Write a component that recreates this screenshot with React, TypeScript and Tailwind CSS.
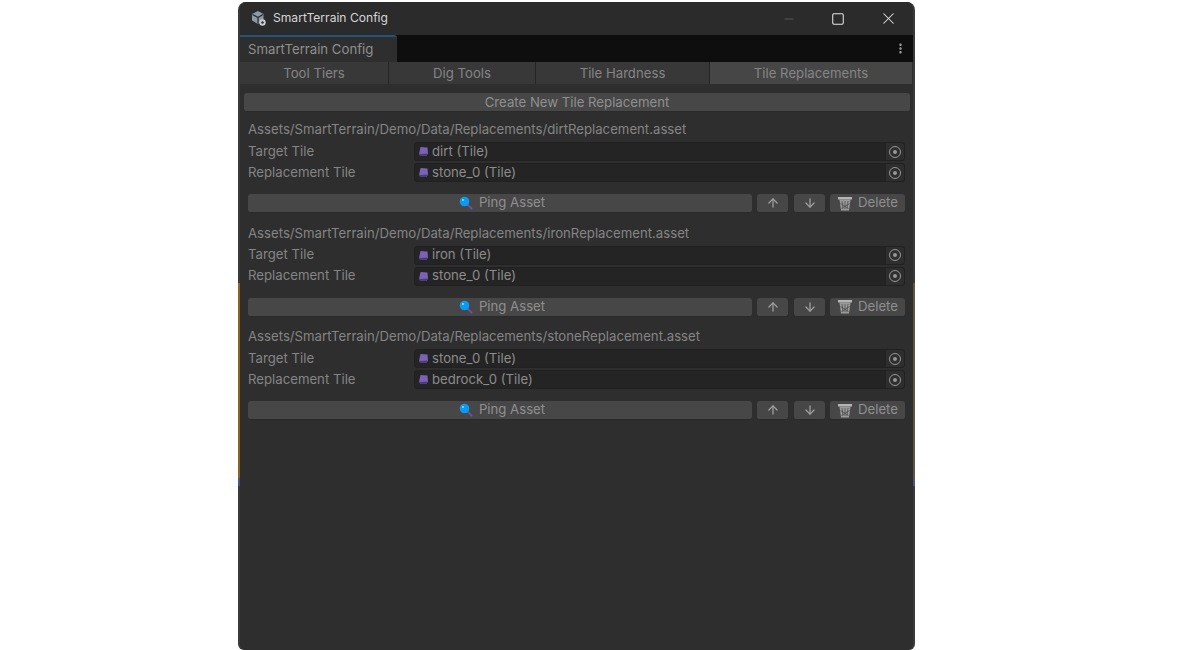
import { ArrowDown, ArrowUp, MoreVertical, Minus, Square, X } from "lucide-react"

const font = { fontFamily: "Inter" }

const tabs = [
  { name: "Tool Tiers", width: "w-[149px]" },
  { name: "Dig Tools", width: "w-[147px]" },
  { name: "Tile Hardness", width: "w-[174px]" },
  { name: "Tile Replacements", width: "w-[202px]" },
]

const replacements = [
  { path: "Assets/SmartTerrain/Demo/Data/Replacements/dirtReplacement.asset", target: "dirt (Tile)", replacement: "stone_0 (Tile)" },
  { path: "Assets/SmartTerrain/Demo/Data/Replacements/ironReplacement.asset", target: "iron (Tile)", replacement: "stone_0 (Tile)" },
  { path: "Assets/SmartTerrain/Demo/Data/Replacements/stoneReplacement.asset", target: "stone_0 (Tile)", replacement: "bedrock_0 (Tile)" },
]

function AppIcon() {
  return (
    <svg width="17" height="17" viewBox="0 0 17 17">
      <path d="M8 1l5.500 3v6.500L8 14 2 10.500V4z" fill="#8d9aa8" />
      <path d="M2.500 4.500L8 7.500l5-3M8 7.500V13.500" stroke="#2b2b2b" strokeWidth="1.300" fill="none" />
      <circle cx="12.500" cy="12.500" r="3.200" fill="#c9ced4" />
      <circle cx="12.500" cy="12.500" r="1.200" fill="#2b2b2b" />
    </svg>
  )
}

function TileIcon() {
  return (
    <svg width="11" height="11" viewBox="0 0 11 11" className="shrink-0">
      <path d="M2.500 1l7 .5.500 6-1.500 2.500-6.500-.5L1 8z" fill="#7a62b8" />
      <path d="M1 7.500l2 .5 6.500-.5-1 2.500-6.500-.5z" fill="#4a3d70" />
    </svg>
  )
}

function PingIcon() {
  return (
    <svg width="14" height="14" viewBox="0 0 14 14" className="shrink-0">
      <path d="M8.500 8.500l4 4" stroke="#6b4fa0" strokeWidth="2" strokeLinecap="round" />
      <circle cx="5.500" cy="5.500" r="4.800" fill="#0a9bf0" />
      <circle cx="4" cy="4" r="1.100" fill="#8fd6ff" />
    </svg>
  )
}

function TrashIcon() {
  return (
    <svg width="16" height="15" viewBox="0 0 16 15" className="shrink-0">
      <path d="M1 1h14v2.500H1z" fill="#b5b5b5" />
      <path d="M2.500 3.500h11l-1.500 11H4z" fill="#9a9a9a" />
      <path d="M5 5l1 8M8 5v8M11 5l-1 8M3.500 7.500l8 5M12.500 7.500l-8 5" stroke="#4f4f4f" strokeWidth="0.800" />
    </svg>
  )
}

function ObjectField({ label, value }: { label: string; value: string }) {
  return (
    <div className="flex items-center h-[19px] pl-[5px] pr-[4px]">
      <div className="w-[166px] shrink-0 text-[13.2px] text-[#858585] whitespace-nowrap">{label}</div>
      <div className="flex-1 h-[19px] flex items-center bg-[#242424] rounded-[3px] border border-[#212121]">
        <div className="flex-1 flex items-center gap-[3px] pl-[3px] text-[13.2px] text-[#8c8c8c] whitespace-nowrap">
          <TileIcon />
          {value}
        </div>
        <div className="w-[18px] h-full flex items-center justify-center bg-[#2e2e2e] rounded-r-[3px]">
          <div className="w-[12px] h-[12px] rounded-full border border-[#969696] flex items-center justify-center">
            <div className="w-[4px] h-[4px] rounded-full bg-[#969696]" />
          </div>
        </div>
      </div>
    </div>
  )
}

function ReplacementBlock({ path, target, replacement }: { path: string; target: string; replacement: string }) {
  return (
    <div className="h-[103.500px] pt-[8px] flex flex-col">
      <div className="h-[19px] pl-[5px] text-[13.2px] leading-[19px] text-[#858585] whitespace-nowrap">{path}</div>
      <div className="mt-[3px] flex flex-col gap-[2px]">
        <ObjectField label="Target Tile" value={target} />
        <ObjectField label="Replacement Tile" value={replacement} />
      </div>
      <div className="mt-[12px] flex items-center h-[19px] pl-[5px] pr-[4px] text-[13.2px] text-[#8f8f8f]">
        <div className="w-[504px] h-[19px] flex items-center justify-center gap-[6px] bg-[#474747] rounded-[3px] border-b border-[#2a2a2a]">
          <PingIcon />
          <span className="mr-[-4px]">Ping Asset</span>
        </div>
        <div className="ml-[5px] w-[31px] h-[19px] flex items-center justify-center bg-[#474747] rounded-[3px] border-b border-[#2a2a2a]">
          <ArrowUp size={14} strokeWidth={2.200} color="#a0a0a0" />
        </div>
        <div className="ml-[6px] w-[31px] h-[19px] flex items-center justify-center bg-[#474747] rounded-[3px] border-b border-[#2a2a2a]">
          <ArrowDown size={14} strokeWidth={2.200} color="#a0a0a0" />
        </div>
        <div className="ml-[5px] w-[75px] h-[19px] flex items-center justify-center gap-[5px] bg-[#474747] rounded-[3px] border-b border-[#2a2a2a]">
          <TrashIcon />
          Delete
        </div>
      </div>
    </div>
  )
}

export default function App() {
  return (
    <div className="w-[1200px] h-[650px] bg-white overflow-hidden pt-[2px] pl-[238px]" style={font}>
      <div className="relative w-[677px] h-[648px]">
        <div className="w-full h-full flex flex-col bg-[#2e2e2e] rounded-t-[8px] rounded-b-[6px] border-l-2 border-r-2 border-[#3a3a3a] overflow-hidden">
          {/* title bar */}
          <div className="h-[33px] shrink-0 flex items-center bg-[#2b2b2b] pl-[10px]">
            <AppIcon />
            <span className="ml-[6px] text-[12.1px] text-[#d6d6d6] whitespace-nowrap">SmartTerrain Config</span>
            <div className="ml-auto flex items-center">
              <Minus size={14} strokeWidth={1.300} color="#666666" className="mr-[35px]" />
              <Square size={14} strokeWidth={1.800} color="#e6e6e6" className="mr-[34px]" />
              <X size={19} strokeWidth={1.300} color="#e6e6e6" className="mr-[15px]" />
            </div>
          </div>

          {/* editor tab strip */}
          <div className="h-[27px] shrink-0 flex items-stretch bg-[#0e0e0e]">
            <div className="w-[157px] flex items-center pl-[8px] pt-[1px] bg-[#2e2e2e] border-t-2 border-[#24527a] rounded-tr-[3px] text-[13.2px] text-[#8f8f8f] whitespace-nowrap">
              SmartTerrain Config
            </div>
            <div className="ml-auto w-[25px] flex items-center justify-center">
              <MoreVertical size={13} strokeWidth={2.500} color="#a5a5a5" />
            </div>
          </div>

          {/* toolbar */}
          <div className="h-[22px] shrink-0 flex">
            {tabs.map((tab, i) => (
              <div
                key={tab.name}
                className={`${tab.width} flex items-center justify-center pt-[1px] text-[13.2px] text-[#858585] whitespace-nowrap ${
                  i === 3 ? "bg-[#464646]" : "bg-[#383838] border-r border-[#252525]"
                }`}
              >
                {tab.name}
              </div>
            ))}
          </div>

          <div className="mt-[9px] mx-[4px] w-[666px] h-[19px] shrink-0 flex items-center justify-center pt-[1px] bg-[#474747] rounded-[3px] border-b border-[#2a2a2a] text-[13.2px] text-[#8f8f8f]">
            Create New Tile Replacement
          </div>

          <div className="pl-[3px] pr-[4px] flex flex-col">
            {replacements.map((r) => (
              <ReplacementBlock key={r.path} path={r.path} target={r.target} replacement={r.replacement} />
            ))}
          </div>
        </div>

        {/* desktop showing through the window edge */}
        <div className="absolute left-0 top-[281px] w-[2px] h-[195px] bg-[#8a6420]" />
        <div className="absolute left-0 top-[476px] w-[2px] h-[8px] bg-[#46567c]" />
        <div className="absolute right-0 top-[281px] w-[2px] h-[195px] bg-[#5f5540]" />
        <div className="absolute right-0 top-[476px] w-[2px] h-[8px] bg-[#46567c]" />
      </div>
    </div>
  )
}
